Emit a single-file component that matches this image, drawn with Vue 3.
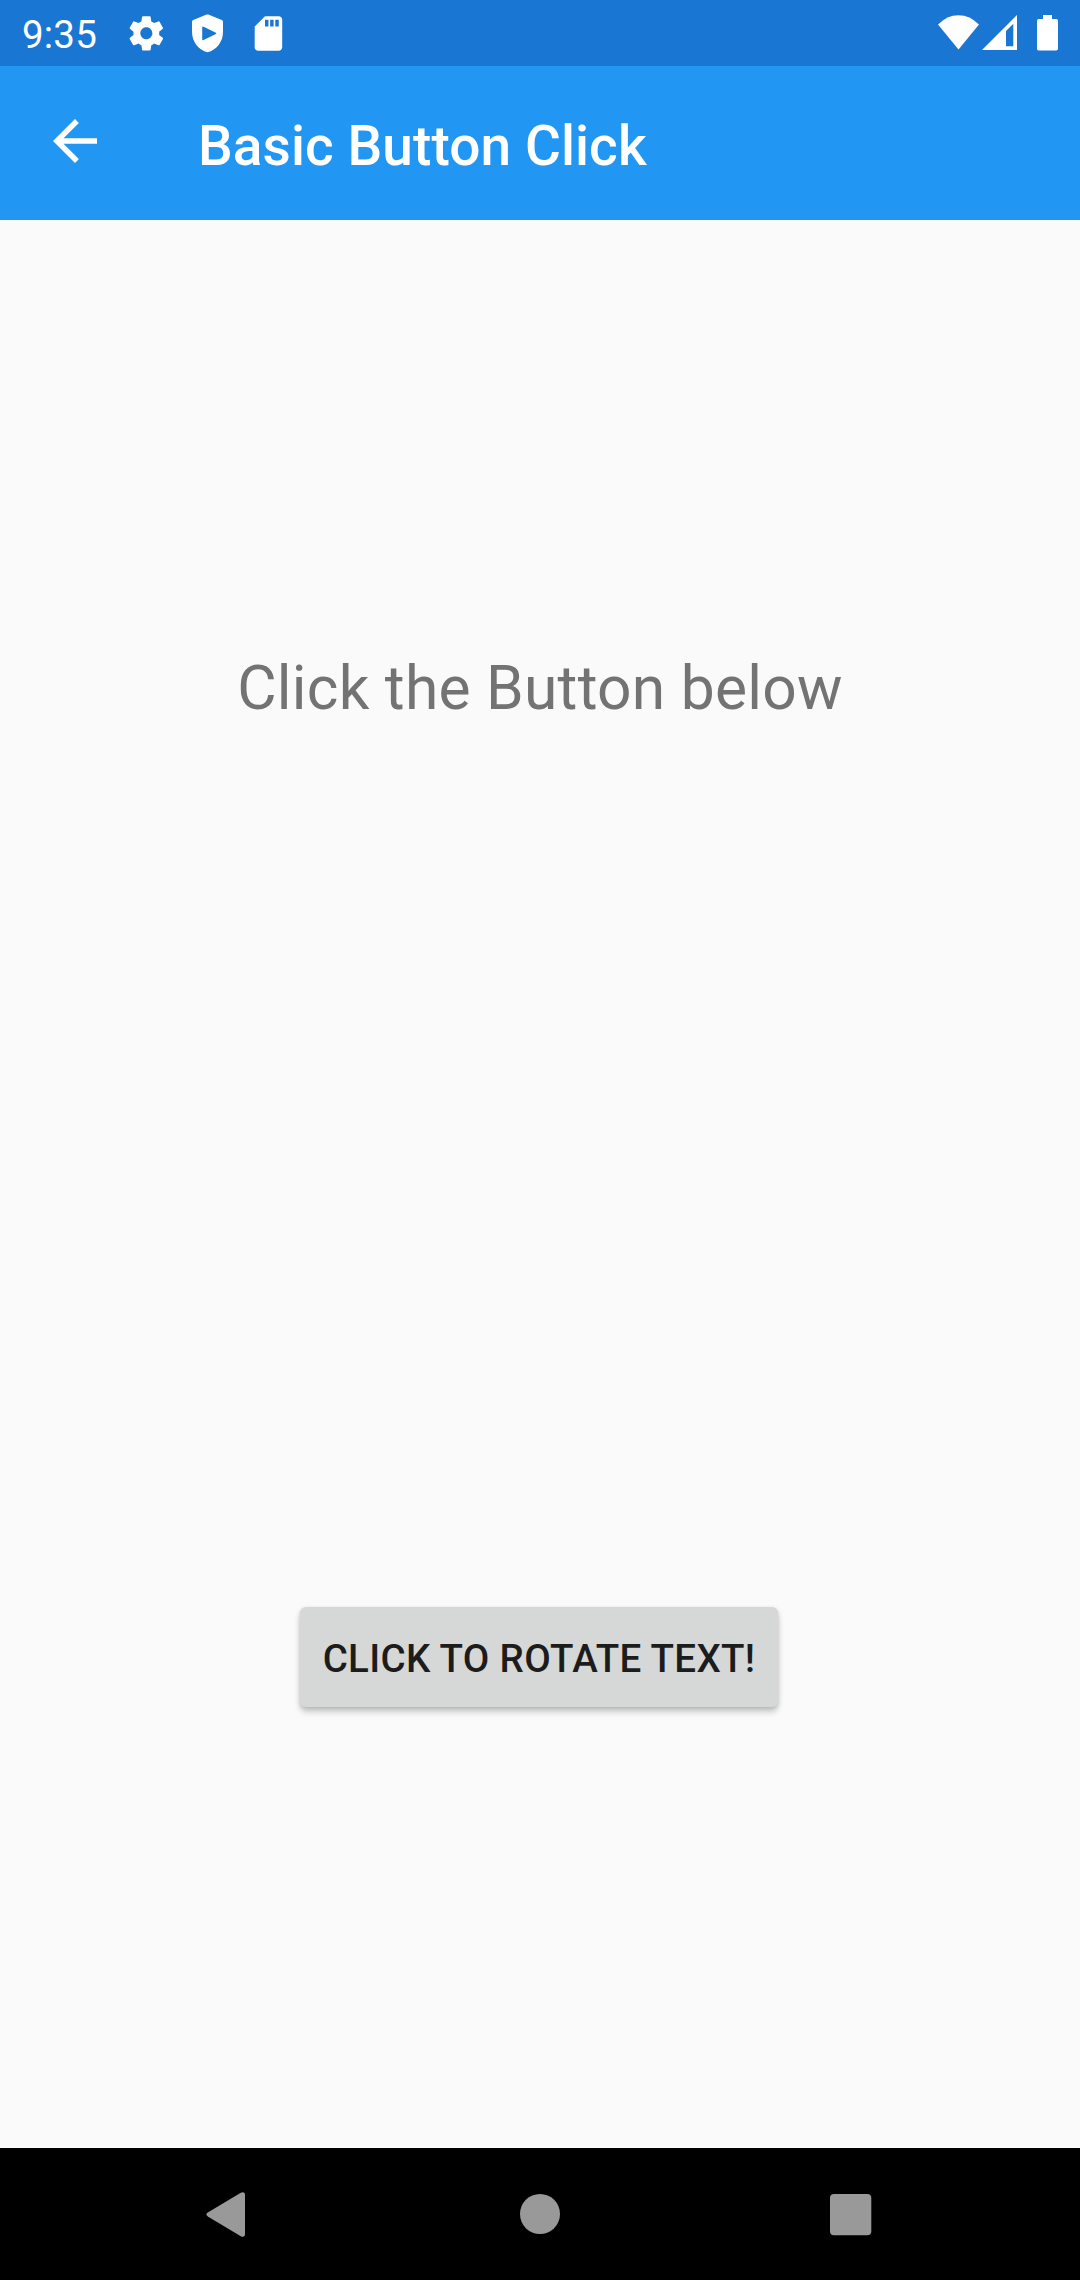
<script setup>
import { ref } from 'vue'

const rotation = ref(0)
const rotate = () => {
  rotation.value += 360
}
</script>

<template>
  <div class="screen">
    <header class="status-bar">
      <span class="clock">9:35</span>
      <svg class="notifications" viewBox="120 0 170 66" width="170" height="66">
        <path
          transform="translate(125.7 12.7) scale(1.72)"
          d="M19.43 12.98c.04-.32.07-.64.07-.98s-.03-.66-.07-.98l2.11-1.65c.19-.15.24-.42.12-.64l-2-3.46c-.12-.22-.39-.3-.61-.22l-2.49 1c-.52-.4-1.08-.73-1.69-.98l-.38-2.65C14.46 2.18 14.25 2 14 2h-4c-.25 0-.46.18-.49.42l-.38 2.65c-.61.25-1.17.59-1.69.98l-2.49-1c-.23-.09-.49 0-.61.22l-2 3.46c-.13.22-.07.49.12.64l2.11 1.65c-.04.32-.07.65-.07.98s.03.66.07.98l-2.11 1.65c-.19.15-.24.42-.12.64l2 3.46c.12.22.39.3.61.22l2.49-1c.52.4 1.08.73 1.69.98l.38 2.65c.03.24.24.42.49.42h4c.25 0 .46-.18.49-.42l.38-2.65c.61-.25 1.17-.59 1.69-.98l2.49 1c.23.09.49 0 .61-.22l2-3.46c.12-.22.07-.49-.12-.64l-2.11-1.65zM12 15.5c-1.93 0-3.5-1.57-3.5-3.5s1.57-3.5 3.5-3.5 3.5 1.57 3.5 3.5-1.57 3.5-3.5 3.5z"
        />
        <path
          fill-rule="evenodd"
          d="M206.7 14.6q.8-.4 1.6 0l13.5 5.3q1.2.5 1.2 1.8v10.3c0 9.5-6.5 18.3-15.5 20.2c-9-1.9-15.5-10.7-15.5-20.2v-10.3q0-1.3 1.2-1.8zM202.2 27.5v11.8q0 1.6 1.4.8l12.3-6q1.2-.7 0-1.4l-12.3-6q-1.4-.8-1.4.8z"
        />
        <path
          transform="translate(247.8 12.8) scale(1.72)"
          d="M18 2h-8L4.02 8 4 20c0 1.1.9 2 2 2h12c1.1 0 2-.9 2-2V4c0-1.1-.9-2-2-2zm-6 6h-2V4h2v4zm3 0h-2V4h2v4zm3 0h-2V4h2v4z"
        />
      </svg>
      <svg class="system" viewBox="930 0 150 66" width="150" height="66">
        <path d="M958.5 49.5L938 24.5Q947 15.2 958.5 15.2T979 24.5z" />
        <path fill-rule="evenodd" d="M982 50L1017 15v35zM1006 31v15.3h7.3V23.7z" />
        <path d="M1043 15h9v4h4.3q1.7 0 1.7 1.7v28.1q0 1.7-1.7 1.7h-17.6q-1.7 0-1.7-1.7V20.7q0-1.7 1.7-1.7h4.3z" />
      </svg>
    </header>

    <div class="app-bar">
      <svg class="back" viewBox="0 0 24 24" width="66" height="66">
        <path d="M20 11H7.83l5.59-5.59L12 4l-8 8 8 8 1.41-1.41L7.83 13H20v-2z" />
      </svg>
      <h1 class="title">Basic Button Click</h1>
    </div>

    <main class="content">
      <p class="label" :style="{ transform: rotation ? `rotate(${rotation}deg)` : null }">Click the Button below</p>
      <button class="action" type="button" @click="rotate">CLICK TO ROTATE TEXT!</button>
    </main>

    <nav class="nav-bar">
      <svg viewBox="0 0 66 66" width="66" height="66">
        <path d="M11.8 31.6L44.8 11.7Q49 10 49 14v38.8Q49 57 44.8 55.2L11.8 35.4Q8.8 33.5 11.8 31.6z" />
      </svg>
      <svg viewBox="0 0 66 66" width="66" height="66">
        <circle cx="33" cy="33" r="20" />
      </svg>
      <svg viewBox="0 0 66 66" width="66" height="66">
        <rect x="12" y="13" width="41.3" height="41.3" rx="4" />
      </svg>
    </nav>
  </div>
</template>

<style>
body {
  margin: 0;
}
</style>

<style scoped>
.screen {
  display: flex;
  flex-direction: column;
  width: 1080px;
  height: 2280px;
  overflow: hidden;
  background: #fafafa;
  font-family: Roboto, sans-serif;
}

svg {
  display: block;
  flex: none;
}

.status-bar {
  display: flex;
  flex: none;
  height: 66px;
  background: #1976d2;
  fill: #fff;
}

.clock {
  box-sizing: border-box;
  width: 120px;
  padding: 2px 0 0 22px;
  color: #fff;
  font-size: 38.5px;
  letter-spacing: 0.2px;
  line-height: 66px;
}

.system {
  margin-left: auto;
}

.app-bar {
  display: flex;
  flex: none;
  align-items: flex-start;
  height: 154px;
  background: #2196f3;
}

.back {
  margin: 42px 0 0 42px;
  fill: #fff;
}

.title {
  margin: 3px 0 0 90px;
  color: #fff;
  font-size: 55px;
  font-weight: 500;
  letter-spacing: 0.08px;
  line-height: 154px;
}

.content {
  display: flex;
  flex: 1;
  flex-direction: column;
  align-items: center;
  padding-top: 434px;
}

.label {
  margin: 0;
  color: #737373;
  font-size: 60.5px;
  letter-spacing: 0.25px;
  line-height: 70px;
  white-space: nowrap;
}

.action {
  box-sizing: border-box;
  width: 478px;
  height: 100px;
  margin: 883px 2px 0 0;
  padding: 3px 0 0;
  border: 0;
  border-radius: 6px;
  background: #d6d8d7;
  box-shadow: 0 5px 6px rgba(0, 0, 0, 0.2), 0 1px 4px rgba(0, 0, 0, 0.12);
  color: #1c1c1c;
  font-family: inherit;
  font-size: 38.5px;
  font-weight: 500;
  letter-spacing: 0.33px;
  line-height: 46px;
  white-space: nowrap;
}

.nav-bar {
  display: flex;
  flex: none;
  align-items: center;
  justify-content: space-between;
  height: 132px;
  padding: 0 196px;
  background: #000;
  fill: #999;
}
</style>
